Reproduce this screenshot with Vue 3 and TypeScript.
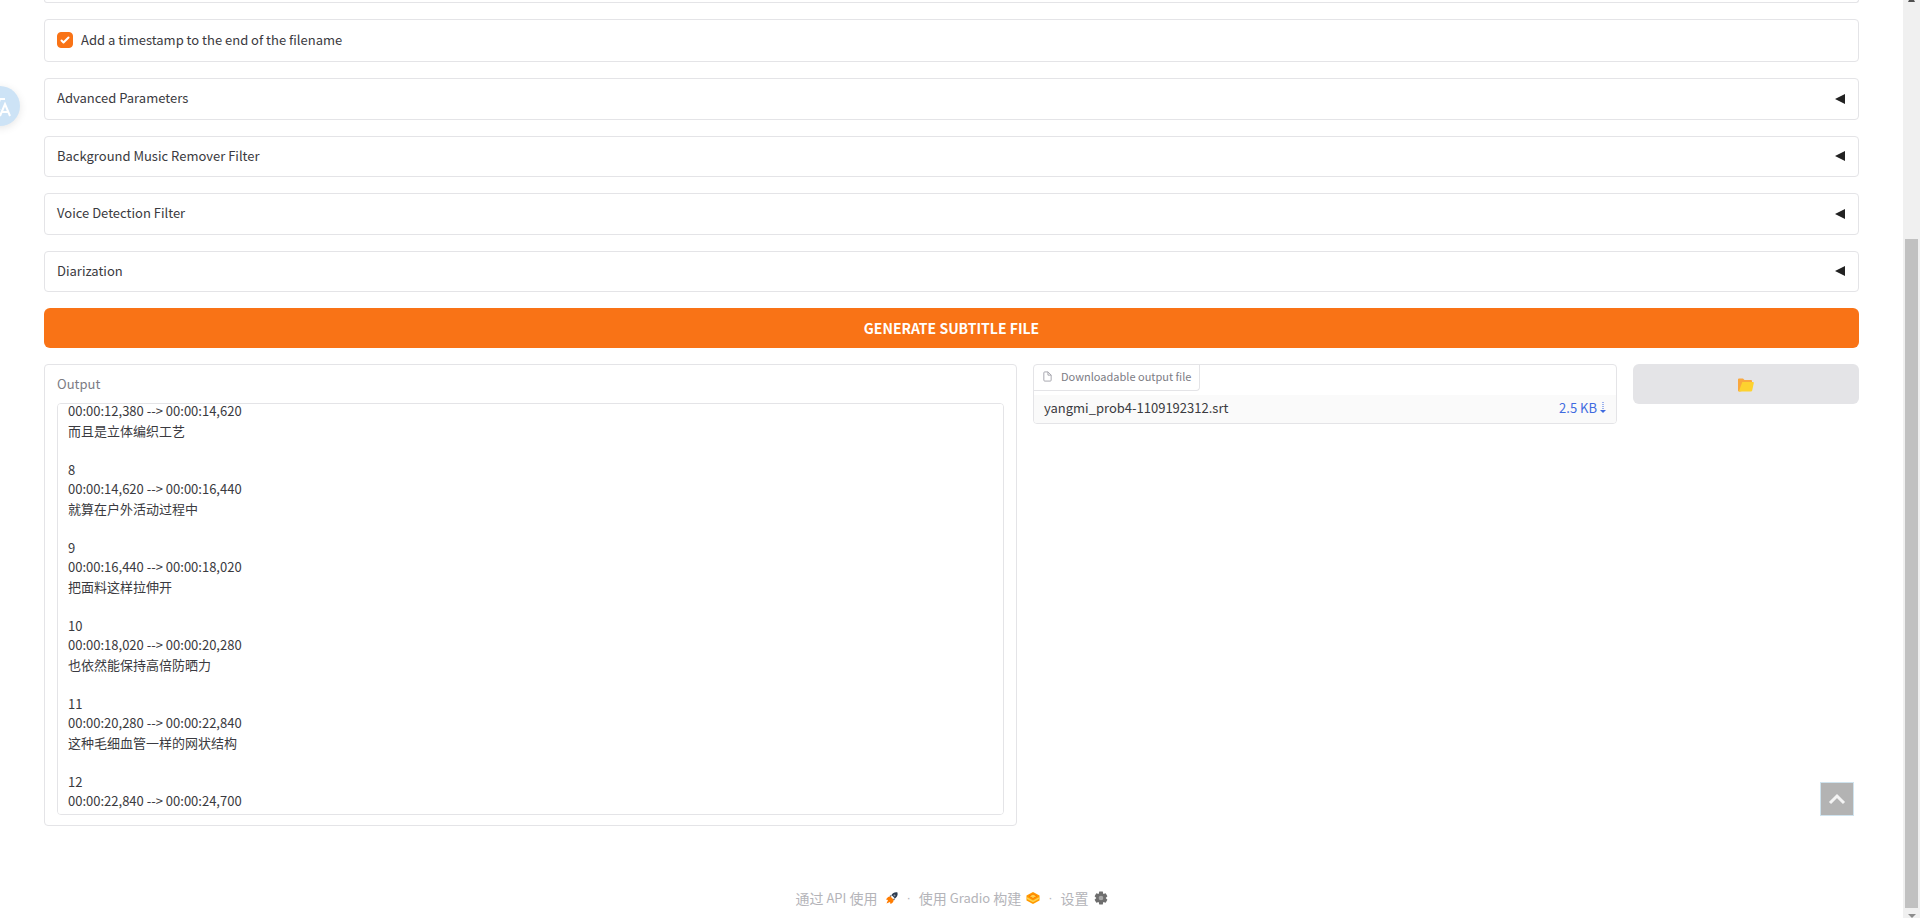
<script setup lang="ts">
import { onMounted, ref } from 'vue'

const filters: string[] = [
  'Advanced Parameters',
  'Background Music Remover Filter',
  'Voice Detection Filter',
  'Diarization',
]

const addTimestamp = ref(true)
const output = ref(`7
00:00:12,380 --> 00:00:14,620
而且是立体编织工艺

8
00:00:14,620 --> 00:00:16,440
就算在户外活动过程中

9
00:00:16,440 --> 00:00:18,020
把面料这样拉伸开

10
00:00:18,020 --> 00:00:20,280
也依然能保持高倍防晒力

11
00:00:20,280 --> 00:00:22,840
这种毛细血管一样的网状结构

12
00:00:22,840 --> 00:00:24,700`)

const outputBox = ref<HTMLTextAreaElement | null>(null)

onMounted(() => {
  if (outputBox.value) outputBox.value.scrollTop = 32
})
</script>

<template>
  <div class="shell">
    <main class="page">
      <div class="block previous"></div>

      <label class="block check">
        <input v-model="addTimestamp" type="checkbox" />
        <span>Add a timestamp to the end of the filename</span>
      </label>

      <button v-for="name in filters" :key="name" type="button" class="block accordion">
        <span>{{ name }}</span>
        <svg class="caret" viewBox="0 0 10 10" aria-hidden="true"><path d="M0 5 10 0v10z" /></svg>
      </button>

      <button type="button" class="generate">GENERATE SUBTITLE FILE</button>

      <section class="results">
        <div class="block output">
          <label for="output">Output</label>
          <textarea id="output" ref="outputBox" v-model="output" readonly></textarea>
        </div>

        <div class="block files">
          <div class="files-label">
            <svg viewBox="0 0 24 24" aria-hidden="true">
              <path d="M13 2H6a2 2 0 0 0-2 2v16a2 2 0 0 0 2 2h12a2 2 0 0 0 2-2V9z" />
              <path d="M13 2v7h7" />
            </svg>
            <span>Downloadable output file</span>
          </div>
          <div class="file">
            <span>yangmi_prob4-1109192312.srt</span>
            <a href="#">2.5 KB
              <svg viewBox="0 0 6 12" aria-hidden="true">
                <path class="dots" d="M3 0v9" />
                <path class="head" d="M0 8h6L3 11z" />
              </svg>
            </a>
          </div>
        </div>

        <button type="button" class="folder" aria-label="Open folder">
          <svg viewBox="0 0 16 14" aria-hidden="true">
            <path fill="#f9a73e" d="M0 1.500Q0 .5 1 .5h4l1.500 1.500H13q1 0 1 1V10L2 13.500H1q-1 0-1-1z" />
            <path fill="#fdd22f" d="M4.300 4H15q1 0 .8 1l-1.600 7.500q-.3 1-1.200 1H.8z" />
          </svg>
        </button>
      </section>

      <footer class="footer">
        <a href="#"><b>通过</b> API <b>使用</b>
          <svg class="rocket" viewBox="0 0 24 24" aria-hidden="true">
            <path fill="#2b3a4f" d="M23 1c-6-1-9 1-12 5l7 7c4-3 6-6 5-12zM11 6 7 8l3 2zM18 13l-2 4-2-3z" />
            <circle cx="17" cy="7" r="2" fill="#8a949f" />
            <path fill="#ff7c00" d="M9 9c-4-1-7 3-9 6l4 1-3 7 7-3 1 4c4-2 7-5 6-9z" />
          </svg>
        </a>
        <i>·</i>
        <a href="#"><b>使用</b> Gradio <b>构建</b>
          <svg class="logo" viewBox="0 0 28 24" aria-hidden="true">
            <path fill="#ff9a00" d="M14 0 27 7v10l-13 7L1 17V7z" />
            <path fill="#ffd34d" stroke="#ff7c00" stroke-width="2" d="M14 4 22 8.500 14 13 6 8.500z" />
            <path fill="none" stroke="#ffd34d" stroke-width="3" d="m2 12 12 7 12-7" />
          </svg>
        </a>
        <i>·</i>
        <a href="#"><b>设置</b>
          <svg class="gear" viewBox="0 0 24 24" aria-hidden="true">
            <path d="M9 1h6l1 4 4-1 3 5-3 3 3 3-3 5-4-1-1 4H9l-1-4-4 1-3-5 3-3-3-3 3-5 4 1z" />
            <circle cx="12" cy="12" r="4" />
          </svg>
        </a>
      </footer>
    </main>

    <div class="scrollbar" aria-hidden="true">
      <svg class="arrow-up" viewBox="0 0 8 3"><path d="M1 0h5l1 2H0z" /></svg>
      <div class="thumb"></div>
      <svg class="arrow-down" viewBox="0 0 8 4"><path d="M0 0h8L4 4z" /></svg>
    </div>

    <button type="button" class="translate" aria-label="Translate">
      <svg viewBox="0 0 40 40" aria-hidden="true">
        <path d="M8 13h17M16 10v3M11 25c5-3 8-7 9-12M12 16c2 4 5 6 8 8" />
        <path d="m20 30 5-12 5 12M22 26h6" />
      </svg>
    </button>
    <button type="button" class="to-top" aria-label="Back to top">
      <svg viewBox="0 0 18 12" aria-hidden="true"><path d="m2 10 7-7 7 7" /></svg>
    </button>
  </div>
</template>

<style>
body {
  background: #fff;
}
</style>

<style scoped>
.shell {
  display: flex;
  height: 100vh;
  overflow: hidden;
  color: #3a3a40;
  font: 13px/1.5 "Noto Sans CJK SC", "Noto Sans", sans-serif;
}
.shell * {
  box-sizing: border-box;
}
button,
textarea {
  margin: 0;
  font: inherit;
  color: inherit;
}
svg {
  display: block;
  flex: none;
}
.page {
  display: flex;
  flex: 1;
  flex-direction: column;
  gap: 16px;
  padding: 0 44px;
}
.page > * {
  flex: none;
}
.block {
  border: 1px solid #e4e4e7;
  border-radius: 4px;
  background: #fff;
}
.previous {
  height: 3px;
  border-top: 0;
  border-radius: 0 0 4px 4px;
}
.check {
  display: flex;
  align-items: center;
  gap: 8px;
  height: 43px;
  padding: 0 12px 2px;
}
.check input {
  appearance: none;
  width: 16px;
  height: 16px;
  margin: 0;
  border: 1px solid #d4d4d8;
  border-radius: 4px;
}
.check input:checked {
  border-color: #f97316;
  background: #f97316 url("data:image/svg+xml,%3Csvg viewBox='0 0 16 16' fill='white' xmlns='http://www.w3.org/2000/svg'%3E%3Cpath d='M12.207 4.793a1 1 0 010 1.414l-5 5a1 1 0 01-1.414 0l-2-2a1 1 0 011.414-1.414L6.500 9.086l4.293-4.293a1 1 0 011.414 0z'/%3E%3C/svg%3E") center / 16px no-repeat;
}
.accordion {
  display: flex;
  align-items: center;
  justify-content: space-between;
  padding: 9px 12px;
  text-align: left;
}
.accordion span {
  padding-bottom: 2px;
}
.caret {
  width: 10px;
  height: 10px;
  fill: #222;
  margin-right: 1px;
}
.generate {
  height: 40px;
  border: 0;
  border-radius: 6px;
  background: #f97316;
  color: #fff;
  font-size: 14px;
  font-weight: 700;
}
.results {
  display: grid;
  grid-template-columns: 973fr 584fr 226fr;
  align-items: start;
  gap: 16px;
}
.output {
  padding: 9px 12px 10px;
}
.output label {
  display: block;
  margin-bottom: 9px;
  color: #7c7c84;
}
.output textarea {
  display: block;
  width: 100%;
  height: 412px;
  padding: 10px;
  border: 1px solid #e4e4e7;
  border-radius: 4px;
  outline: 0;
  background: #fff;
  resize: none;
  scrollbar-width: none;
}
.files {
  overflow: hidden;
}
.files-label {
  display: flex;
  align-items: center;
  gap: 8px;
  width: fit-content;
  height: 26px;
  margin-bottom: 4px;
  padding: 0 8px 2px;
  border: solid #e4e4e7;
  border-width: 0 1px 1px 0;
  border-radius: 0 0 4px 0;
  color: #7c7c84;
  font-size: 11px;
}
.files-label svg {
  width: 11px;
  height: 11px;
  fill: none;
  stroke: #a1a1aa;
  stroke-width: 2;
}
.file {
  display: flex;
  align-items: center;
  justify-content: space-between;
  height: 28px;
  padding: 0 10px 2px;
  background: #fafafa;
}
.file a {
  display: flex;
  align-items: center;
  gap: 3px;
  color: #3f6be0;
  text-decoration: none;
}
.file svg {
  width: 6px;
  height: 12px;
}
.dots {
  stroke: #3f6be0;
  stroke-dasharray: 1 1;
}
.head {
  fill: #3f6be0;
}
.folder {
  display: grid;
  place-items: center;
  height: 40px;
  padding: 2px 0 0;
  border: 0;
  border-radius: 6px;
  background: #e4e4e7;
}
.folder svg {
  width: 16px;
  height: 14px;
}
.footer {
  display: flex;
  align-items: center;
  justify-content: center;
  gap: 8px;
  margin-top: 46px;
  color: #b4b4b9;
}
.footer a {
  display: flex;
  align-items: center;
  gap: 3px;
  color: inherit;
  text-decoration: none;
}
.footer b {
  font-size: 14px;
  font-weight: 400;
}
.footer i {
  font-family: "Liberation Sans", sans-serif;
  font-style: normal;
}
.rocket {
  width: 12px;
  height: 12px;
  margin-left: 6px;
}
.logo {
  width: 14px;
  height: 12px;
  margin-left: 2px;
}
.gear {
  width: 14px;
  height: 14px;
  margin-left: 2px;
  fill: #6e6e6e;
}
.gear circle {
  fill: #a8a8a8;
}
.scrollbar {
  display: flex;
  flex: none;
  flex-direction: column;
  align-items: center;
  width: 17px;
  background: #f0f0f0;
}
.arrow-up {
  width: 8px;
  height: 3px;
  fill: #505050;
}
.thumb {
  flex: 1;
  width: 13px;
  margin: 236px 0 6px;
  background: #c1c1c1;
}
.arrow-down {
  width: 8px;
  height: 4px;
  fill: #8c8c8c;
}
.translate {
  position: fixed;
  top: 86px;
  left: -20px;
  width: 40px;
  height: 40px;
  padding: 0;
  border: 0;
  border-radius: 50%;
  background: #cde3f6;
  box-shadow: 0 2px 8px #0000001a;
}
.translate svg {
  fill: none;
  stroke: #fff;
  stroke-width: 2;
}
.to-top {
  position: fixed;
  right: 66px;
  bottom: 102px;
  display: grid;
  place-items: center;
  width: 34px;
  height: 34px;
  padding: 0;
  border: 1px solid #cfe3ee;
  background: #b3b3b3;
}
.to-top svg {
  width: 18px;
  height: 12px;
  fill: none;
  stroke: #f4f4f4;
  stroke-width: 3;
}
</style>
